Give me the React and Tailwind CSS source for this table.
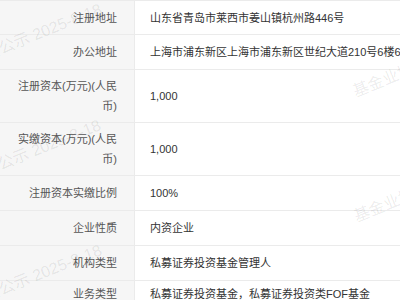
import React from "react";

const rows = [
  { label: "注册地址", value: "山东省青岛市莱西市姜山镇杭州路446号", first: true },
  { label: "办公地址", value: "上海市浦东新区上海市浦东新区世纪大道210号6楼601室" },
  { label: ["注册资本(万元)(人民", "币)"], value: "1,000" },
  { label: ["实缴资本(万元)(人民", "币)"], value: "1,000" },
  { label: "注册资本实缴比例", value: "100%" },
  { label: "企业性质", value: "内资企业" },
  { label: "机构类型", value: "私募证券投资基金管理人" },
  { label: "业务类型", value: "私募证券投资基金，私募证券投资类FOF基金", last: true },
];

function Row({ row }) {
  return (
    <div
      className={
        "flex min-h-[35px] border-b border-[#ebebeb] " +
        (row.first ? "border-t" : "")
      }
    >
      <div
        className={
          "w-[135px] shrink-0 bg-[#f6f6f6] border-r border-[#ebebeb] flex justify-end text-right pl-[12px] pr-[17px] leading-[20px] text-[#555] " +
          (row.last ? "items-start pt-[3px] pb-[9px]" : "items-center py-[6px]")
        }
      >
        {Array.isArray(row.label) ? (
          <span>
            {row.label[0]}
            <br />
            {row.label[1]}
          </span>
        ) : (
          <span>{row.label}</span>
        )}
      </div>
      <div
        className={
          "flex-1 min-w-0 flex pl-[15px] leading-[20px] whitespace-nowrap overflow-hidden text-[#333] " +
          (row.last ? "items-start pt-[3px]" : "items-center")
        }
      >
        {row.value}
      </div>
    </div>
  );
}

function WmRight({ right, bottom }) {
  return (
    <div
      className="absolute whitespace-nowrap text-[16px] leading-[18px] text-[rgba(0,0,0,0.085)] origin-bottom-right -rotate-[22deg] pointer-events-none"
      style={{ right: 400 - right, top: bottom - 18 }}
    >
      基金业协会公示 2025-8-18
    </div>
  );
}

function WmLeft({ left, bottom }) {
  return (
    <div
      className="absolute whitespace-nowrap text-[16px] leading-[18px] text-[rgba(0,0,0,0.085)] origin-bottom-left -rotate-[22deg] pointer-events-none"
      style={{ left, top: bottom - 18 }}
    >
      基金业协会公示 2025-8-18
    </div>
  );
}

export default function App() {
  return (
    <div className="relative w-[400px] h-[300px] overflow-hidden bg-white text-[11px] font-['Liberation_Sans','Noto_Sans_CJK_SC',sans-serif]">
      <div className="flex flex-col">
        {rows.map((r, i) => (
          <Row key={i} row={r} />
        ))}
      </div>
      <WmRight right={104} bottom={17} />
      <WmRight right={103} bottom={133} />
      <WmRight right={104} bottom={258} />
      <WmLeft left={357} bottom={101} />
      <WmLeft left={358} bottom={226} />
    </div>
  );
}
